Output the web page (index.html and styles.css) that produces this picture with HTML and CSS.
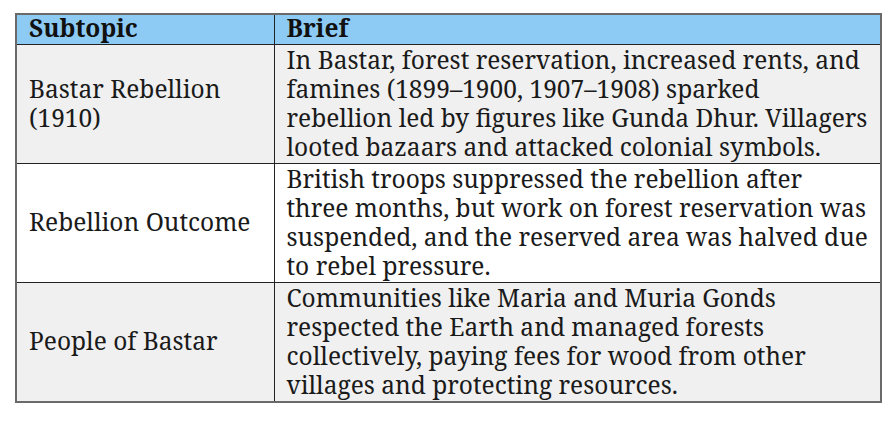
FILE: index.html
```html
<!DOCTYPE html>
<html>
<head>
<meta charset="utf-8">
<link rel="stylesheet" href="styles.css">
</head>
<body>
<table class="topics">
  <colgroup><col class="c1"><col class="c2"></colgroup>
  <thead>
    <tr class="head"><th>Subtopic</th><th>Brief</th></tr>
  </thead>
  <tbody>
    <tr class="shaded">
      <td class="sub">Bastar Rebellion<br>(1910)</td>
      <td class="brief">In Bastar, forest reservation, increased rents, and<br>famines (1899–1900, 1907–1908) sparked<br>rebellion led by figures like Gunda Dhur. Villagers<br>looted bazaars and attacked colonial symbols.</td>
    </tr>
    <tr class="plain">
      <td class="sub">Rebellion Outcome</td>
      <td class="brief">British troops suppressed the rebellion after<br>three months, but work on forest reservation was<br>suspended, and the reserved area was halved due<br>to rebel pressure.</td>
    </tr>
    <tr class="shaded">
      <td class="sub">People of Bastar</td>
      <td class="brief">Communities like Maria and Muria Gonds<br>respected the Earth and managed forests<br>collectively, paying fees for wood from other<br>villages and protecting resources.</td>
    </tr>
  </tbody>
</table>
</body>
</html>
```
FILE: styles.css
```css
html, body {
  margin: 0;
  padding: 0;
  background: #ffffff;
}
body {
  font-family: "Noto Serif", "DejaVu Serif", serif;
  color: #1a1a1a;
  padding: 13px 0 0 15px;
}
.topics {
  border-collapse: collapse;
  width: 865px;
  table-layout: fixed;
  border: 2px solid #6a6a6a;
  font-size: 24.5px;
  line-height: 29px;
}
.c1 { width: 258px; }
.c2 { width: 607px; }
.topics th, .topics td {
  border: 1px solid #222;
  padding: 0 12px;
  text-align: left;
}
.head th {
  background: #8dcbf5;
  font-weight: bold;
  line-height: 26px;
  padding-bottom: 3px;
  color: #111;
}
.topics td {
  vertical-align: middle;
}
.topics td.sub {
  padding-bottom: 3px;
}
.topics td.brief {
  padding: 0 4px 2px 12px;
  white-space: nowrap;
}
.shaded td { background: #f0f0f0; }
.plain td { background: #ffffff; }
```
